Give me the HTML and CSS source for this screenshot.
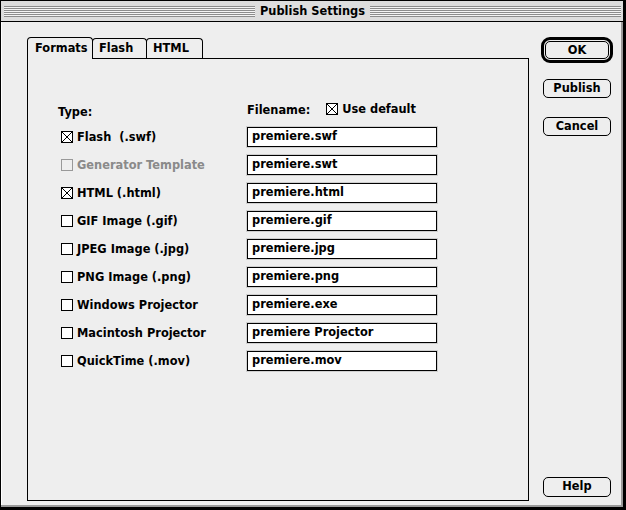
FILE: index.html
```html
<!DOCTYPE html>
<html>
<head>
  <meta charset="utf-8">
  <link rel="stylesheet" href="styles.css">
</head>
<body>
  <div class="window">
    <div class="titlebar">
      <div class="stripes"></div>
      <div class="title">Publish Settings</div>
      <div class="stripes"></div>
    </div>

    <div class="content">
      <div class="tabbox">
        <div class="tabs">
          <div class="tab tab-formats active">Formats</div>
          <div class="tab tab-flash">Flash</div>
          <div class="tab tab-html">HTML</div>
        </div>

        <div class="panel">
          <div class="formats">
            <div class="head head-type">Type:</div>
            <div class="head head-file">
              <span>Filename:</span>
              <span class="check">
                <svg class="box" width="12" height="12" viewBox="0 0 12 12"><rect x="0.5" y="0.5" width="11" height="11" fill="#fff" stroke="#000"/><path d="M1 1L11 11M11 1L1 11" stroke="#000"/></svg>
                Use default
              </span>
            </div>

            <div class="check row-label">
              <svg class="box" width="12" height="12" viewBox="0 0 12 12"><rect x="0.5" y="0.5" width="11" height="11" fill="#fff" stroke="#000"/><path d="M1 1L11 11M11 1L1 11" stroke="#000"/></svg>
              Flash&nbsp; (.swf)
            </div>
            <div class="field">premiere.swf</div>

            <div class="check row-label disabled">
              <svg class="box" width="12" height="12" viewBox="0 0 12 12"><rect x="0.5" y="0.5" width="11" height="11" fill="#eee" stroke="#999"/></svg>
              Generator Template
            </div>
            <div class="field">premiere.swt</div>

            <div class="check row-label">
              <svg class="box" width="12" height="12" viewBox="0 0 12 12"><rect x="0.5" y="0.5" width="11" height="11" fill="#fff" stroke="#000"/><path d="M1 1L11 11M11 1L1 11" stroke="#000"/></svg>
              HTML (.html)
            </div>
            <div class="field">premiere.html</div>

            <div class="check row-label">
              <svg class="box" width="12" height="12" viewBox="0 0 12 12"><rect x="0.5" y="0.5" width="11" height="11" fill="#fff" stroke="#000"/></svg>
              GIF Image (.gif)
            </div>
            <div class="field">premiere.gif</div>

            <div class="check row-label">
              <svg class="box" width="12" height="12" viewBox="0 0 12 12"><rect x="0.5" y="0.5" width="11" height="11" fill="#fff" stroke="#000"/></svg>
              JPEG Image (.jpg)
            </div>
            <div class="field">premiere.jpg</div>

            <div class="check row-label">
              <svg class="box" width="12" height="12" viewBox="0 0 12 12"><rect x="0.5" y="0.5" width="11" height="11" fill="#fff" stroke="#000"/></svg>
              PNG Image (.png)
            </div>
            <div class="field">premiere.png</div>

            <div class="check row-label">
              <svg class="box" width="12" height="12" viewBox="0 0 12 12"><rect x="0.5" y="0.5" width="11" height="11" fill="#fff" stroke="#000"/></svg>
              Windows Projector
            </div>
            <div class="field">premiere.exe</div>

            <div class="check row-label">
              <svg class="box" width="12" height="12" viewBox="0 0 12 12"><rect x="0.5" y="0.5" width="11" height="11" fill="#fff" stroke="#000"/></svg>
              Macintosh Projector
            </div>
            <div class="field">premiere Projector</div>

            <div class="check row-label">
              <svg class="box" width="12" height="12" viewBox="0 0 12 12"><rect x="0.5" y="0.5" width="11" height="11" fill="#fff" stroke="#000"/></svg>
              QuickTime (.mov)
            </div>
            <div class="field">premiere.mov</div>
          </div>
        </div>
      </div>

      <div class="buttons">
        <div class="default-ring"><div class="btn btn-ok">OK</div></div>
        <div class="btn btn-publish">Publish</div>
        <div class="btn btn-cancel">Cancel</div>
        <div class="btn btn-help">Help</div>
      </div>
    </div>
  </div>
</body>
</html>
```

FILE: styles.css
```css
body {
  margin: 0;
  background: #eeeeee;
  font-family: "DejaVu Sans", Verdana, sans-serif;
  font-size: 11.4px;
  font-weight: bold;
  color: #000;
}

.window {
  box-sizing: border-box;
  width: 626px;
  height: 510px;
  border: 1px solid #000;
  border-right-width: 3px;
  border-bottom-width: 3px;
  background: #eeeeee;
  box-shadow: inset -2px -2px 0 #9a9a9a, inset 1px 0 0 #fff;
  display: flex;
  flex-direction: column;
}

/* title bar */
.titlebar {
  height: 20px;
  border-bottom: 1px solid #000;
  background: #dddddd;
  display: flex;
  align-items: center;
  padding: 0 2px 0 3px;
}

.stripes {
  flex: 1;
  height: 11px;
  background: repeating-linear-gradient(#8c8c8c 0 1px, #f4f4f4 1px 2px);
}

.title {
  padding: 0 5px 0 5px;
  line-height: 14px;
}

/* dialog body */
.content {
  display: flex;
  padding: 15px 0 0 26px;
}

.tabbox {
  width: 502px;
}

.tabs {
  display: flex;
  align-items: flex-end;
  height: 21px;
}

.tab {
  box-sizing: border-box;
  height: 20px;
  border: 1px solid #000;
  border-bottom: none;
  border-radius: 4px 4px 0 0;
  padding: 2px 0 0 7px;
  line-height: 15px;
}

.tab + .tab {
  margin-left: -1px;
}

.tab.active {
  height: 22px;
  margin-bottom: -1px;
  background: #eeeeee;
  position: relative;
  z-index: 1;
  padding-top: 3px;
}

.tab-formats { width: 66px; }
.tab-flash { width: 55px; padding-left: 6px; }
.tab-html { width: 57px; padding-left: 6px; }

.panel {
  box-sizing: border-box;
  height: 443px;
  border: 1px solid #000;
  padding: 42px 0 0 30px;
}

.formats {
  display: grid;
  grid-template-columns: 189px 190px;
  grid-template-rows: 18px;
  grid-auto-rows: 20px;
  row-gap: 8px;
  align-items: center;
}

.head {
  display: flex;
  align-items: center;
}

.head-type {
  padding-top: 3px;
}

.head-file .check {
  margin-left: 16px;
  margin-top: -3px;
}

.check {
  display: flex;
  align-items: center;
}

.box {
  display: block;
  flex: none;
  margin-right: 4px;
  shape-rendering: crispEdges;
}

.row-label .box {
  margin-left: 3px;
}

.disabled {
  color: #8a8a8a;
}

.field {
  box-sizing: border-box;
  height: 20px;
  border: 1px solid #000;
  background: #fff;
  box-shadow: 0 0 0 1px #cfcfcf;
  padding-left: 4px;
  line-height: 17px;
}

/* right hand buttons */
.buttons {
  width: 72px;
  margin-left: 12px;
  display: flex;
  flex-direction: column;
  align-items: center;
  height: 460px;
}

.default-ring {
  box-sizing: border-box;
  width: 72px;
  height: 26px;
  border: 3px solid #000;
  border-radius: 9px;
  padding: 1px;
}

.btn {
  box-sizing: border-box;
  width: 68px;
  height: 19px;
  border: 1px solid #000;
  border-radius: 5px;
  text-align: center;
  line-height: 16px;
}

.btn-ok {
  width: 100%;
  height: 100%;
}

.btn-publish {
  margin-top: 16px;
}

.btn-cancel {
  margin-top: 19px;
}

.btn-help {
  margin-top: auto;
  height: 20px;
  line-height: 17px;
}
```
